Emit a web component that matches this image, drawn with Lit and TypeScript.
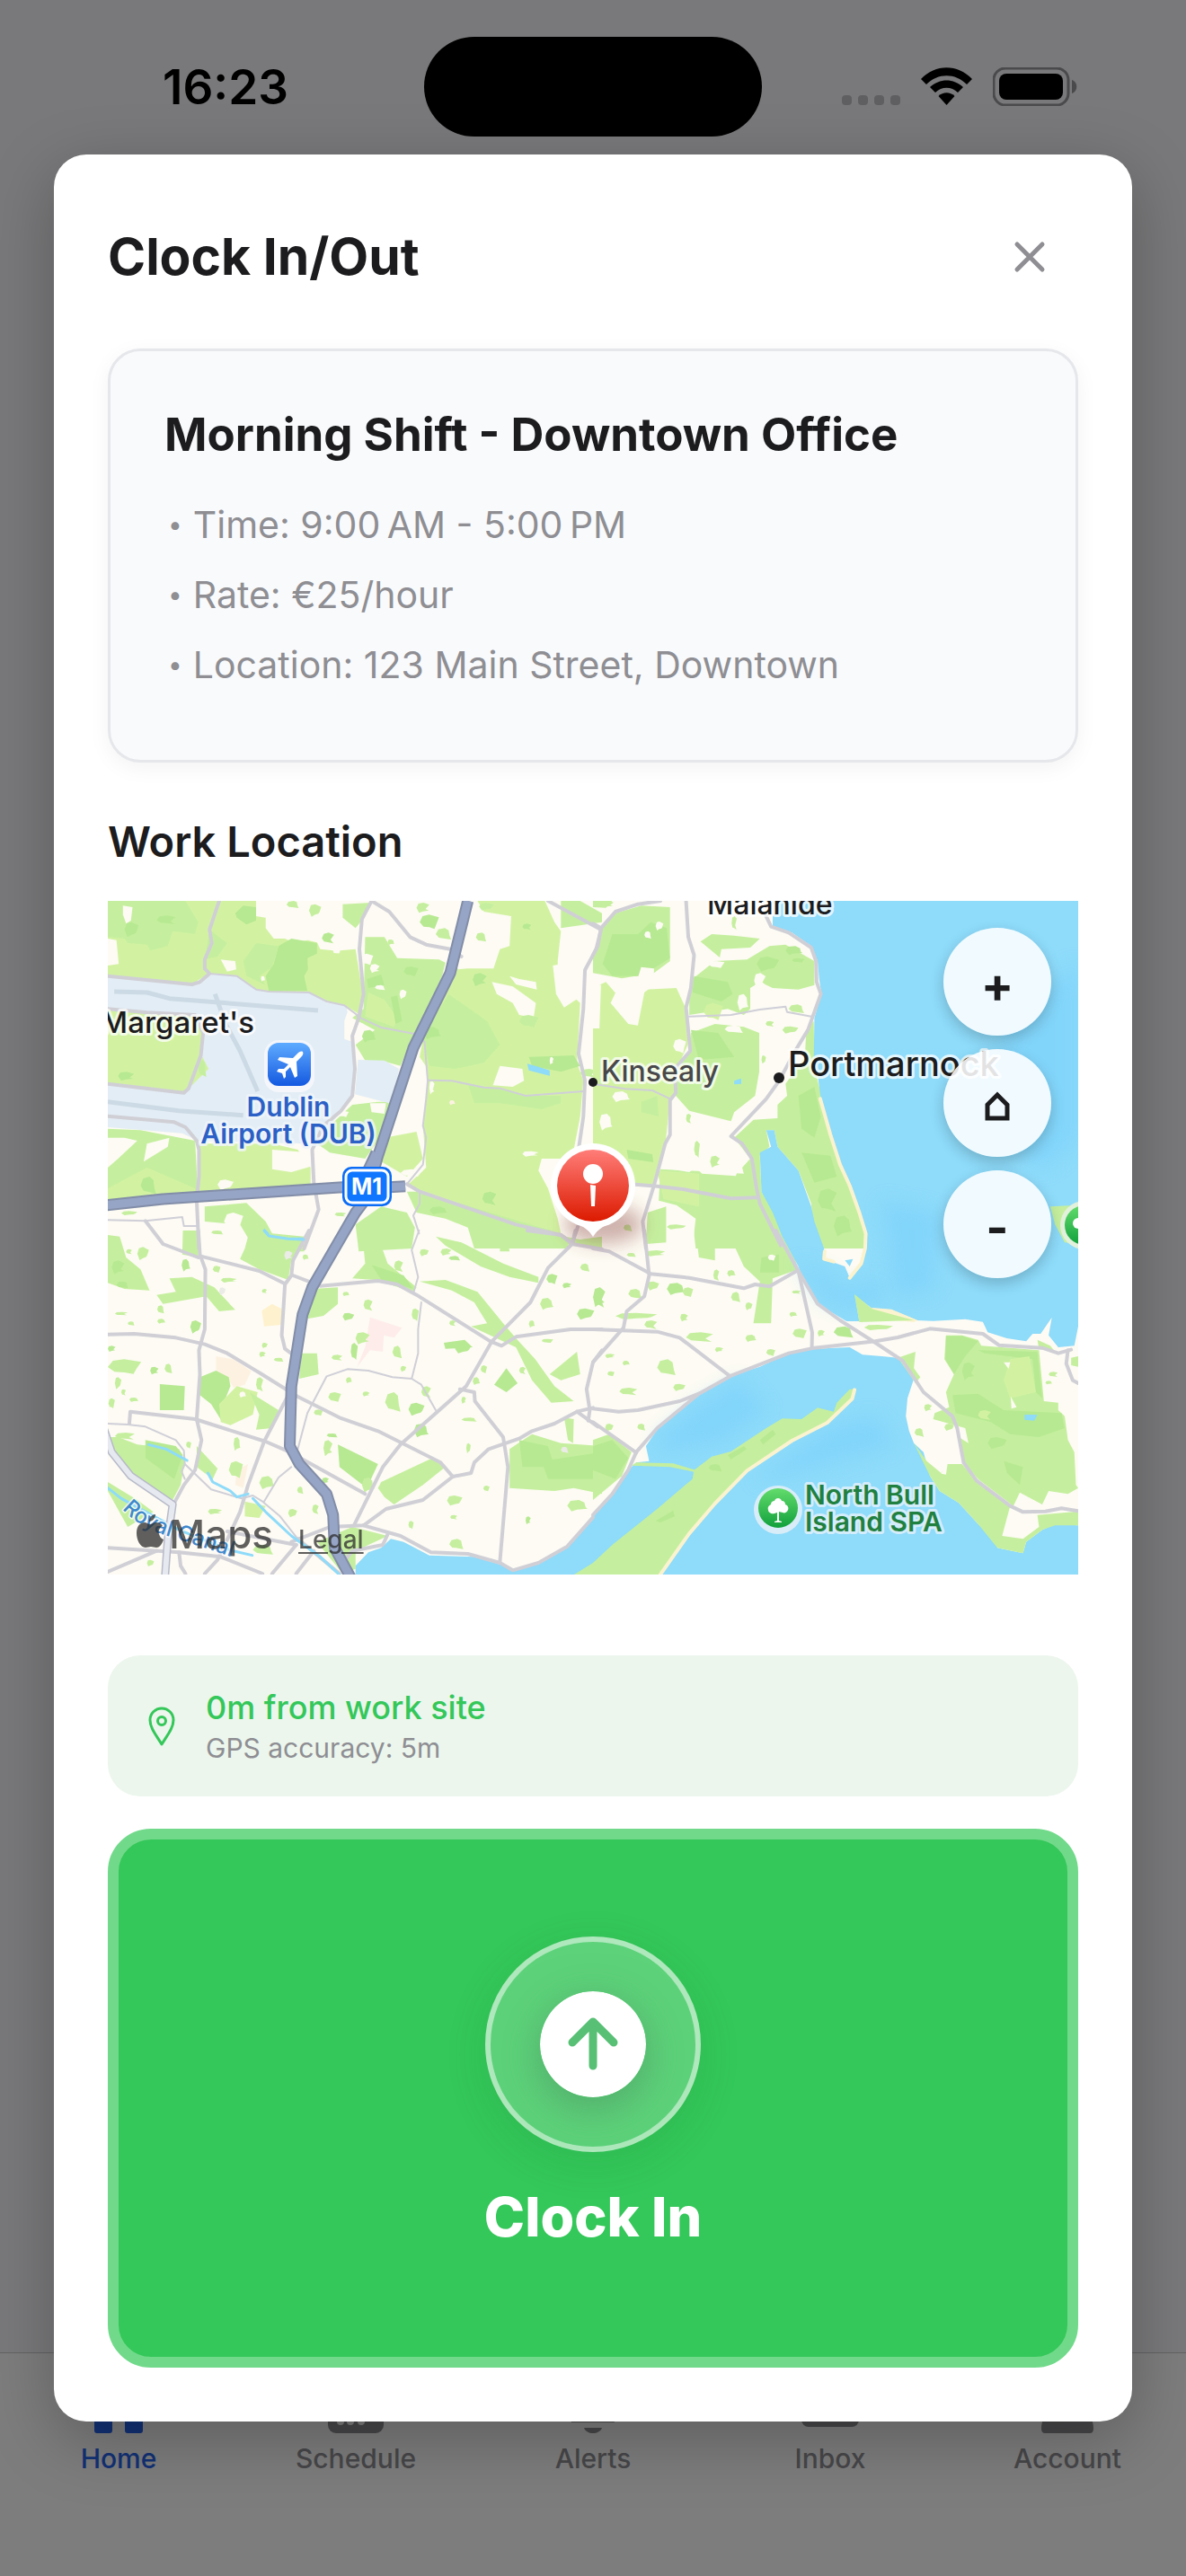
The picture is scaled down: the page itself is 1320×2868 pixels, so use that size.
import { LitElement, html, svg, css } from "lit";
import { customElement, property } from "lit/decorators.js";

/* ---------- map data: four survey tiles, each drawn in its own grid ---------- */

type TileId = "nw" | "ne" | "sw" | "se";
type Shape = [kind: string, points: string];
type Blob = [kind: string, x: number, y: number, w: number, h: number];

const TILE_MATRIX: Record<TileId, string> = {
  nw: "matrix(0.35714 0 0 0.33333 -10 -13)",
  ne: "matrix(0.35714 0 0 0.33333 540 -13)",
  sw: "matrix(0.35714 0 0 0.33333 -10 367)",
  se: "matrix(0.35714 0 0 0.33333 540 367)",
};

const AREAS: Record<TileId, Shape[]> = {
  nw: [
    ["light", "28,39 490,39 490,90 520,95 520,130 545,165 580,165 610,180 650,170 680,178 690,200 730,205 740,245 752,205 800,200 815,300 825,350 815,420 770,390 710,375 655,345 530,342 490,335 430,290 345,282 330,290 290,318 28,290"],
    ["mid", "28,39 270,39 310,110 300,150 230,140 215,190 160,205 150,185 90,180 80,165 28,160"],
    ["mid", "345,135 400,180 370,225 330,235"],
    ["deep", "425,80 450,55 490,60 490,105 460,118 430,95"],
    ["deep", "560,190 600,165 680,180 680,215 640,290 650,340 530,340 520,290 545,250"],
    ["mid", "490,180 560,190 540,260 500,290 520,320 460,290 450,240"],
    ["light", "650,230 690,210 760,215 790,250 800,300 770,345 700,340 655,340"],
    ["mid", "760,50 850,45 815,110 800,130 760,95"],
    ["cream", "75,55 105,60 100,105 85,115 75,85"],
    ["cream", "28,165 55,170 62,250 28,255"],
    ["cream", "380,235 425,240 428,268 400,275"],
    ["mid", "830,160 890,160 930,230 1060,235 1080,245 1070,290 1010,430 980,490 940,590 890,575 830,572 800,520 860,470 790,430 825,400"],
    ["light", "840,345 890,370 930,430 920,460 830,425"],
    ["deep", "835,300 880,285 890,320 840,330"],
    ["deep", "910,360 930,355 945,440 925,450"],
    ["light", "1120,265 1230,265 1250,200 1280,190 1285,90 1200,75 1180,39 1390,39 1420,110 1440,140 1430,240 1430,310 1500,380 1490,580 1510,640 1500,760 1480,870 1440,900 1380,900 1370,940 1400,1000 1430,1100 1440,1150 1300,1120 960,990 1020,930 1010,790 1020,700 1025,600 1000,560 1010,500 1040,440 1090,330 1100,270"],
    ["cream", "1130,200 1140,170 1180,210 1230,205 1220,255 1120,268"],
    ["mid", "1010,500 1040,440 1090,350 1210,440 1250,520 1200,580 1110,600 1030,590"],
    ["mid", "1440,39 1500,39 1568,80 1568,110 1440,130"],
    ["cream", "1225,310 1290,325 1362,380 1355,430 1310,420 1290,380 1240,350"],
    ["cream", "1280,290 1310,300 1362,310 1365,335 1300,318"],
    ["cream", "1250,590 1320,600 1325,640 1290,660 1228,655"],
    ["cream", "1415,255 1490,240 1500,360 1450,395 1425,350"],
    ["deep", "1340,560 1480,555 1500,590 1440,610 1350,590"],
    ["mid", "1150,650 1260,670 1330,690 1440,690 1440,715 1380,735 1250,715 1170,715"],
    ["mid", "28,800 130,805 300,840 310,1040 200,1045 28,1050"],
    ["light", "150,930 300,1000 300,1040 28,1050 28,1000"],
    ["cream", "28,830 80,830 120,840 60,900 28,930"],
    ["cream", "150,850 220,830 215,860 140,910"],
    ["light", "310,850 540,850 620,870 660,930 660,985 400,1022 310,1030"],
    ["cream", "540,870 660,880 665,925 600,945 540,935"],
    ["mid", "720,790 790,720 870,710 910,710 870,840 830,900 720,880 680,850"],
    ["cream", "845,715 895,715 890,750 850,745"],
    ["light", "890,830 990,810 1010,900 960,960 880,910"],
    ["mid", "960,1010 1000,1010 1440,1150 1470,1200 1170,1200 1150,1130 1080,1100 990,1080"],
    ["mid", "330,1060 460,1048 520,1110 540,1150 640,1160 640,1210 490,1210 440,1120 330,1110"],
    ["mid", "800,1120 880,1060 960,1080 985,1130 975,1200 810,1210"],
    ["airport", "28,295 290,318 345,282 430,290 490,335 530,342 655,345 710,378 770,388 775,410 765,440 765,500 790,510 800,560 795,690 770,720 720,790 640,850 310,840 260,815 28,795"],
    ["airport", "808,570 890,572 935,600 930,640 905,715 798,685"],
    ["light", "28,405 150,412 300,420 325,480 320,555 342,600 280,665 260,680 28,650"],
    ["water", "1335,583 1365,592 1405,605 1405,623 1340,605"],
    ["water", "515,1132 545,1165 520,1160"],
    ["water", "585,1163 640,1163 640,1178 590,1172"],
  ],
  ne: [
    ["mid", "70,80 150,55 240,60 240,240 190,280 90,298 0,280 0,220 25,130"],
    ["deep", "60,150 140,150 180,110 230,130 240,230 150,290 60,290 30,250"],
    ["mid", "0,39 60,39 40,62 0,60"],
    ["light", "0,330 40,310 130,420 160,335 260,330 290,400 295,520 270,580 258,680 240,700 225,860 190,990 100,985 0,980"],
    ["cream", "55,380 90,300 130,330 150,260 190,265 190,320 160,345 140,455 110,450"],
    ["cream", "0,310 25,320 20,465 0,465"],
    ["mid", "335,175 370,150 440,155 520,165 490,195 400,200 395,228"],
    ["mid", "310,300 380,240 480,235 550,190 600,185 690,240 690,320 640,335 560,330 520,310 490,330 490,400 470,420 420,400 300,420 300,350"],
    ["deep", "315,290 420,310 435,350 400,375 310,345"],
    ["mid", "305,480 380,450 470,460 518,480 518,610 505,690 440,745 430,775 300,740 258,690 255,610 300,550"],
    ["deep", "305,470 390,480 440,560 330,570"],
    ["mid", "665,470 688,440 690,560 700,640 720,720 745,830 790,960 840,1090 850,1200 690,1200 680,1050 640,940 575,860 565,805 540,805 550,860 520,890 525,1010 570,1090 600,1200 310,1200 320,1100 260,1055 205,1040 210,935 470,950 465,930 490,900 440,830 500,770 575,765 575,720 605,690 600,650 660,560"],
    ["cream", "215,930 300,800 360,810 400,850 430,850 465,900 445,958 340,950 320,930 300,945"],
    ["light", "200,940 330,950 330,1060 220,1035"],
    ["deep", "640,690 690,660 710,760 690,830 650,800"],
    ["deep", "650,880 740,890 760,960 690,980"],
    ["cream", "310,1100 250,1055 140,1030 60,1160 60,1200 320,1200"],
    ["mid", "170,1080 228,1060 228,1180 165,1185"],
    ["water", "440,640 462,632 462,650 440,652"],
    ["deep", "105,870 185,885 188,912 110,900"],
    ["mid", "150,710 200,690 205,760 150,745"],
  ],
  sw: [
    ["mid", "28,15 65,20 85,90 130,130 158,200 80,195 28,175"],
    ["mid", "262,0 310,0 310,90 260,80"],
    ["mid", "470,0 640,30 600,100 590,165 500,130 440,95 455,60"],
    ["mid", "820,0 870,20 900,110 990,190 980,205 860,165 790,160 830,110"],
    ["deep", "850,115 950,150 980,195 880,165"],
    ["mid", "220,160 290,155 360,190 425,265 375,270 335,220 200,245 180,215 240,205"],
    ["mid", "665,195 745,190 745,245 700,285 650,295"],
    ["mid", "1000,170 1080,165 1180,205 1260,310 1300,360 1360,430 1420,520 1480,570 1410,575 1350,500 1300,390 1160,320 1210,310 1170,240 1100,200"],
    ["mid", "1050,20 1130,40 1260,110 1370,155 1370,175 1280,155 1190,120 1080,50"],
    ["mid", "1250,0 1270,0 1280,70 1250,70"],
    ["mid", "1360,0 1500,30 1568,20 1568,60 1470,50"],
    ["pink", "845,290 945,325 920,358 888,350 885,405 845,400 805,455 830,390"],
    ["sand", "508,268 540,245 570,262 568,315 515,320"],
    ["peach", "365,420 420,430 475,470 455,515 420,525 400,490 365,480"],
    ["deep", "315,490 365,468 405,490 410,520 380,600 385,640 350,580 315,550"],
    ["light", "375,580 430,520 495,540 480,615 410,650 380,640"],
    ["mid", "470,540 560,600 540,660 490,665 500,615"],
    ["deep", "190,513 268,520 265,600 190,600"],
    ["mid", "630,410 680,410 685,480 625,495"],
    ["mid", "28,690 60,690 120,715 250,730 268,770 255,850 230,900 110,815 40,740"],
    ["deep", "145,700 240,720 262,750 235,830 145,760"],
    ["mid", "305,720 370,795 355,830 305,790"],
    ["deep", "745,715 870,780 835,860 750,790"],
    ["mid", "880,840 1040,760 1080,790 1010,850 920,915 890,890 870,860"],
    ["mid", "1280,730 1350,680 1440,710 1568,720 1568,880 1480,860 1420,870 1280,860"],
    ["deep", "1310,700 1400,720 1420,790 1320,790"],
    ["deep", "1380,770 1568,740 1568,830 1400,830"],
    ["mid", "28,840 120,900 170,940 90,990 28,870"],
    ["light", "455,905 520,920 500,960 455,955"],
    ["mid", "680,1040 790,990 900,1020 800,1070 800,1130 760,1146"],
    ["deep", "1232,515 1270,460 1305,510 1270,540"],
    ["mid", "1405,480 1490,405 1500,480 1440,500"],
    ["deep", "1075,375 1140,365 1165,390 1080,395"],
    ["mid", "1450,625 1480,630 1478,710 1462,700"],
    ["peach", "430,800 465,780 450,860 425,850"],
  ],
  se: [
    ["mid", "320,0 600,0 640,130 560,160 555,310 500,310 520,170 470,120 440,50 380,60 380,100 330,90"],
    ["deep", "525,90 580,80 580,140 520,140"],
    ["mid", "0,700 50,680 120,740 90,820 0,900"],
    ["deep", "0,720 60,700 110,760 70,830 0,800"],
    ["water", "560,-1101 560,-1015 620,-995 680,-950 700,-900 705,-840 712,-790 690,-710 688,-580 700,-520 710,-440 740,-320 770,-220 800,-150 830,-60 850,10 850,50 840,110 800,158 785,120 720,95 720,60 690,-30 680,-80 640,-200 575,-280 565,-335 540,-335 555,-280 520,-260 525,-130 560,-60 590,20 600,40 640,120 660,180 700,245 790,303 830,303 815,215 870,260 930,265 1010,300 1060,302 1160,296 1215,305 1230,340 1290,360 1350,370 1370,345 1395,345 1430,290 1420,350 1450,390 1500,385 1512,320 1512,-1101"],
    ["water", "0,950 60,880 110,800 135,775 175,770 165,720 200,665 250,610 330,545 430,485 520,455 610,410 690,395 800,390 840,415 900,420 950,425 1000,495 980,560 975,620 985,670 1000,710 1030,740 1050,820 1080,870 1140,910 1200,980 1255,1040 1260,1060 1340,1078 1350,1040 1400,1000 1440,980 1512,985 1512,1155 -740,1155 -740,1120 -700,1075 -660,1060 -630,1030 -590,1040 -510,1085 -370,1090 -290,1115 -250,1135 -170,1110 -80,1055"],
    ["shoal", "330,580 460,500 540,600 400,710 220,740 200,700"],
    ["shoal", "640,100 720,140 790,200 900,160 900,230 800,260 720,230"],
    ["shoal", "740,650 880,620 940,720 600,820 500,840"],
    ["shoal", "1300,-700 1512,-900 1512,-300 1400,-200 1200,-400"],
    ["shoal", "900,-100 1080,-60 1060,200 940,220"],
    ["cream2", "870,258 930,263 1012,300 1000,306 860,290"],
    ["mid", "815,213 870,262 1000,300 830,306"],
    ["mid", "1425,-80 1512,-85 1512,45 1470,40 1440,-20"],
    ["mid", "0,1110 60,1050 130,990 200,930 310,830 315,800 370,755 430,738 540,660 590,628 650,630 700,592 750,605 760,575 800,530 815,530 810,560 730,640 620,700 480,800 380,910 300,1010 210,1150 -60,1150"],
    ["mid", "135,775 250,778 320,800 315,806 240,790 120,785"],
    ["deep", "420,750 470,720 480,730 430,765"],
    ["deep", "520,700 560,665 570,680 530,715"],
    ["deep", "195,970 250,935 255,955 210,975"],
    ["mid", "1100,350 1150,350 1200,365 1210,385 1390,400 1405,570 1450,575 1450,600 1470,620 1480,700 1500,740 1505,850 1512,860 1480,880 1420,870 1400,915 1330,875 1310,920 1200,830 1160,780 1140,690 1170,710 1160,660 1060,630 1065,610 1110,590 1100,540 1125,480 1095,430"],
    ["deep", "1100,352 1150,352 1200,370 1160,420 1125,480 1098,430"],
    ["deep", "1120,550 1200,545 1280,600 1460,610 1470,660 1390,690 1300,680 1240,640 1130,610"],
    ["deep", "1200,400 1385,405 1400,560 1380,540 1370,430 1220,410"],
    ["light", "1300,430 1360,420 1380,540 1300,560 1280,500"],
    ["mid", "1000,710 1040,770 1085,810 1105,780 1150,780 1190,830 1300,920 1290,960 1275,1020 1340,1030 1390,990 1385,950 1512,938 1512,985 1440,985 1400,1000 1350,1040 1340,1078 1260,1060 1200,980 1140,910 1080,870 1050,820"],
    ["cream", "1095,790 1105,780 1100,815 1085,812"],
    ["deep", "1280,770 1340,790 1330,850 1290,810"],
    ["mid", "950,425 1005,405 1000,460 1020,490 1005,510"],
    ["water", "1345,615 1385,615 1375,635 1345,632"],
    ["cream", "1280,440 1300,440 1295,462"],
    ["cream", "1302,555 1320,590 1304,595"],
    ["water", "785,100 810,95 800,120"],
    ["mid", "1385,365 1425,385 1440,405 1390,395"],
    ["mid", "1490,425 1512,420 1512,455 1490,450"],
  ],
};

const BLOBS: Record<TileId, Blob[]> = {
  nw: [
    ["cream", 545, 85, 60, 26], ["mid", 585, 39, 40, 25], ["mid", 655, 50, 38, 42], ["deep", 695, 145, 38, 38],
    ["mid", 900, 168, 22, 18], ["cream", 815, 215, 40, 40], ["cream", 845, 250, 30, 30], ["cream", 860, 320, 34, 18],
    ["cream", 937, 335, 22, 32], ["cream", 765, 445, 60, 24], ["cream", 780, 470, 30, 28], ["deep", 950, 258, 46, 34],
    ["deep", 1165, 280, 44, 44], ["mid", 1175, 145, 34, 32], ["mid", 1185, 45, 46, 26], ["deep", 1320, 115, 28, 22],
    ["deep", 820, 470, 46, 42], ["deep", 1000, 85, 60, 50], ["mid", 990, 45, 40, 34], ["mid", 1050, 130, 50, 40],
    ["cream", 370, 970, 50, 34], ["deep", 1195, 1010, 44, 48], ["deep", 1030, 1060, 60, 26], ["cream", 940, 935, 70, 26],
    ["cream", 1320, 875, 50, 18], ["cream", 1380, 920, 26, 40], ["cream", 1500, 470, 40, 70], ["mid", 1500, 600, 50, 30],
    ["peach", 1092, 705, 20, 16], ["cream", 745, 740, 34, 22], ["cream", 1030, 640, 16, 46], ["mid", 350, 1140, 40, 14],
    ["mid", 70, 1075, 50, 14], ["mid", 735, 1080, 36, 14], ["cream", 505, 290, 14, 18], ["cream", 390, 1080, 60, 60],
    ["deep", 60, 610, 50, 30], ["mid", 310, 570, 26, 60], ["deep", 80, 110, 44, 50], ["deep", 180, 88, 60, 30],
    ["deep", 1010, 460, 60, 40], ["mid", 1310, 420, 60, 44], ["cream", 1405, 560, 12, 26], ["deep", 130, 960, 50, 60],
  ],
  ne: [
    ["mid", 30, 39, 34, 22], ["cream", 160, 140, 22, 26], ["cream", 195, 108, 24, 30], ["mid", 432, 90, 16, 48],
    ["deep", 600, 190, 56, 30], ["deep", 620, 230, 40, 16], ["cream", 502, 280, 36, 50], ["mid", 610, 385, 50, 30],
    ["mid", 590, 458, 50, 24], ["mid", 538, 440, 26, 20], ["cream", 450, 350, 36, 56], ["light", 345, 380, 60, 60],
    ["cream", 300, 428, 50, 30], ["cream", 410, 455, 60, 26], ["mid", 525, 555, 14, 28], ["mid", 290, 750, 16, 34],
    ["cream", 20, 750, 42, 56], ["mid", 315, 840, 18, 60], ["mid", 365, 890, 30, 40], ["mid", 95, 1120, 28, 24],
    ["mid", 230, 1120, 60, 16], ["mid", 325, 1140, 28, 30], ["cream", 60, 675, 58, 36], ["cream", 360, 240, 50, 24],
    ["cream", 510, 335, 100, 50], ["deep", 60, 180, 70, 60], ["deep", 510, 225, 70, 50], ["deep", 700, 1000, 60, 80],
    ["deep", 750, 1090, 60, 70], ["cream", 250, 500, 40, 50],
  ],
  sw: [
    ["deep", 40, 100, 40, 46], ["deep", 55, 170, 40, 24], ["mid", 120, 55, 36, 44], ["mid", 85, 62, 18, 18],
    ["deep", 258, 95, 28, 42], ["mid", 355, 118, 24, 24], ["mid", 380, 158, 50, 16], ["mid", 182, 250, 22, 28],
    ["deep", 285, 300, 34, 44], ["mid", 50, 272, 40, 12], ["mid", 182, 295, 28, 16], ["mid", 28, 430, 104, 52],
    ["deep", 160, 455, 26, 26], ["mid", 205, 445, 24, 34], ["mid", 50, 490, 20, 40], ["mid", 70, 530, 14, 22],
    ["mid", 95, 558, 30, 14], ["mid", 30, 560, 20, 36], ["deep", 28, 385, 24, 20], ["mid", 90, 304, 22, 14],
    ["deep", 760, 275, 36, 26], ["mid", 825, 230, 28, 40], ["mid", 760, 205, 22, 14], ["deep", 785, 375, 22, 60],
    ["mid", 800, 340, 44, 40], ["mid", 915, 385, 30, 44], ["mid", 940, 452, 18, 20], ["mid", 725, 415, 34, 20],
    ["mid", 770, 490, 20, 20], ["mid", 715, 540, 40, 34], ["mid", 822, 538, 22, 16], ["mid", 892, 540, 50, 68],
    ["deep", 965, 575, 50, 44], ["mid", 1005, 520, 30, 40], ["deep", 982, 645, 48, 46], ["mid", 670, 598, 28, 22],
    ["mid", 700, 700, 28, 54], ["deep", 710, 678, 36, 14], ["deep", 1110, 380, 50, 30], ["mid", 1092, 300, 20, 20],
    ["mid", 1165, 490, 24, 26], ["mid", 1190, 450, 20, 28], ["mid", 1130, 555, 14, 24], ["mid", 1130, 625, 50, 14],
    ["mid", 1145, 710, 14, 34], ["mid", 1310, 455, 20, 26], ["mid", 1375, 225, 44, 40], ["deep", 1395, 145, 34, 36],
    ["deep", 1445, 175, 28, 18], ["mid", 1500, 110, 30, 28], ["deep", 1490, 260, 54, 38], ["deep", 1545, 190, 30, 70],
    ["mid", 1340, 300, 20, 24], ["mid", 1380, 362, 36, 14], ["mid", 1065, 60, 34, 24], ["deep", 1090, 85, 38, 16],
    ["mid", 1000, 62, 28, 24], ["mid", 920, 100, 28, 40], ["mid", 500, 820, 50, 44], ["mid", 405, 770, 44, 60],
    ["deep", 695, 825, 22, 20], ["mid", 618, 855, 20, 26], ["mid", 590, 930, 28, 28], ["mid", 665, 915, 20, 34],
    ["mid", 820, 825, 40, 50], ["mid", 965, 970, 16, 28], ["deep", 1330, 955, 16, 26], ["mid", 1092, 1030, 46, 36],
    ["mid", 1085, 885, 48, 34], ["mid", 1095, 950, 22, 16], ["mid", 1460, 900, 66, 38], ["mid", 1198, 852, 20, 20],
    ["mid", 500, 405, 20, 18], ["mid", 545, 425, 32, 14], ["mid", 508, 375, 18, 18], ["mid", 490, 490, 22, 50],
    ["mid", 420, 690, 22, 46], ["mid", 272, 705, 16, 24], ["mid", 340, 930, 44, 18], ["mid", 480, 1050, 66, 34],
    ["mid", 150, 1100, 22, 22], ["mid", 508, 195, 16, 16], ["mid", 635, 80, 20, 18], ["mid", 975, 260, 22, 44],
    ["grey", 578, 68, 26, 30], ["grey", 1440, 722, 24, 22], ["grey", 375, 190, 20, 26], ["mid", 50, 675, 62, 24],
    ["cream", 438, 538, 22, 20], ["deep", 345, 490, 50, 60],
  ],
  se: [
    ["deep", 0, 190, 38, 66], ["mid", 110, 195, 44, 34], ["mid", 70, 275, 130, 22], ["mid", 160, 300, 40, 30],
    ["deep", 230, 175, 60, 40], ["mid", 280, 190, 32, 34], ["mid", 272, 278, 24, 26], ["mid", 430, 205, 30, 36],
    ["mid", 475, 240, 22, 26], ["mid", 620, 200, 28, 12], ["mid", 612, 272, 26, 16], ["mid", 622, 328, 44, 34],
    ["mid", 700, 332, 22, 22], ["deep", 750, 320, 64, 40], ["mid", 845, 315, 90, 18], ["mid", 290, 340, 84, 34],
    ["mid", 475, 348, 36, 24], ["mid", 540, 396, 28, 24], ["mid", 380, 390, 26, 16], ["mid", 200, 430, 60, 56],
    ["mid", 250, 512, 38, 24], ["mid", 82, 525, 56, 26], ["mid", 92, 435, 24, 16], ["mid", 45, 470, 22, 18],
    ["mid", 38, 412, 30, 14], ["mid", 138, 645, 26, 24], ["mid", 38, 645, 26, 26], ["mid", 1032, 580, 24, 24],
    ["mid", 1002, 660, 30, 30], ["mid", 1095, 645, 30, 24], ["mid", 1420, 472, 28, 18], ["mid", 1410, 502, 22, 12],
    ["mid", 160, 0, 68, 40], ["mid", 165, 66, 60, 20], ["mid", 105, 75, 30, 14], ["deep", 1230, 690, 60, 40],
    ["mid", 375, 130, 18, 40], ["mid", 418, 132, 28, 22], ["cream", 545, 80, 24, 22], ["deep", 1150, 440, 40, 60],
    ["deep", 360, 780, 44, 26], ["mid", 170, 170, 36, 30], ["light", 1200, 600, 40, 34],
  ],
};

const ROADS: Record<TileId, Shape[]> = {
  nw: [
    ["road", "375,39 345,135 352,180 330,235 330,265 345,282 315,310 290,318 28,290"],
    ["lane", "345,282 430,290 490,335 530,342 655,345 710,375 765,388 805,420"],
    ["road", "28,400 150,412 300,420 325,480 318,555 280,665 265,680 28,650"],
    ["road", "28,758 235,778 270,795 305,840 312,870 312,960 305,1040 312,1200"],
    ["road", "850,39 820,100 812,200 825,350 810,430 790,490 798,600 790,690 755,740 700,790 665,870 670,980 685,1070 640,1200"],
    ["road", "850,39 905,75 970,160 1020,185 1095,200 1130,225"],
    ["lane", "805,425 880,462 980,482 1015,510 1025,640 1020,700 1010,790 1020,830 1010,920 960,985"],
    ["road", "960,985 1000,1010 1300,1120 1440,1155 1480,1185"],
    ["lane", "1025,638 1100,640 1200,662 1250,665 1330,690 1510,675"],
    ["road", "1400,39 1565,135 1550,200 1515,270 1510,400 1495,550 1515,640 1510,760 1495,870"],
    ["lane", "28,1105 145,1108 260,1095 265,1125 305,1125"],
    ["lane", "1000,1010 1000,1050 980,1090 998,1150"],
    ["road", "1495,1120 1475,1185"],
  ],
  ne: [
    ["road", "0,115 25,130 70,75 140,50 210,39"],
    ["road", "25,130 15,190 0,220"],
    ["road", "290,39 297,160 315,220 305,330 290,395 303,540 255,600 258,680 240,705 240,820 225,850 190,990 155,1110 165,1200"],
    ["lane", "300,425 430,420 520,402 600,392 605,410 680,425"],
    ["road", "535,80 555,125 610,145 680,195 695,240 697,310 710,350 670,470 630,540 580,640 540,700 430,825 465,850 495,900 510,1000 520,1050 585,1190"],
    ["lane", "0,650 100,667 185,672 240,700"],
    ["road", "115,985 200,992 280,1002 430,1033 510,1030"],
  ],
  sw: [
    ["road", "145,-32 200,45 310,90"],
    ["road", "310,0 315,80 332,130 330,330 312,400 315,480 305,630 320,700 300,800 265,850 225,930"],
    ["road", "315,85 500,135 580,178"],
    ["road", "655,0 605,100 600,150 580,180 570,350 580,395 605,415"],
    ["road", "605,150 690,185 870,168 930,180 990,215 1220,370 1255,385 1300,355 1470,330 1568,330"],
    ["lane", "998,0 975,65 995,155 980,210"],
    ["lane", "1005,240 995,330 995,410 975,495 915,490 840,468 775,463 710,487 650,610 620,730"],
    ["lane", "975,495 1005,515 1050,600"],
    ["road", "28,347 110,345 240,358 330,380 400,410 500,475 620,555 750,625 870,670 1065,775 1103,822 1160,810 1170,775 1215,730 1310,695 1350,670 1420,645 1490,605 1540,592"],
    ["road", "1485,0 1475,45 1400,125 1345,240 1225,370 1145,520 940,715 885,790 795,985"],
    ["road", "1335,0 1440,15 1475,45 1568,62"],
    ["road", "1125,530 1170,540 1172,570 1260,690 1275,790 1250,1105"],
    ["road", "95,645 98,605 300,630 520,705 595,740"],
    ["lane", "28,645 90,648 145,655 240,700 265,735 268,780 258,805 268,830"],
    ["road", "590,550 515,705 465,850 440,940 410,1010 370,1100 330,1146"],
    ["road", "620,755 830,880"],
    ["lane", "600,790 560,825 515,905"],
    ["lane", "268,780 350,865 445,895 480,885 510,905 565,955 620,1030"],
    ["road", "620,1030 750,1146"],
    ["road", "1103,822 1010,900 895,930 825,985 720,990 600,1040"],
    ["road", "825,985 940,1020 1035,1075 1150,1080 1250,1110 1290,1135 1370,1110 1460,1055 1540,958"],
    ["road", "400,1005 615,1050"],
    ["road", "28,1060 250,1075 380,1090 510,1146"],
    ["road", "28,1140 180,1070"],
    ["road", "250,1075 255,1120 270,1146"],
    ["road", "615,1050 540,1146"],
    ["road", "670,1070 615,1146"],
    ["road", "900,1015 885,1050 790,1070 760,1110"],
    ["road", "1568,400 1540,440 1520,530 1530,600 1525,635"],
    ["road", "1490,605 1555,655"],
    ["creek", "340,810 355,840 410,870 430,890 465,880"],
    ["creek", "480,895 520,940 600,1020 690,1090 750,1150"],
    ["creek", "155,715 210,730 275,768"],
    ["creek", "28,860 70,895 250,1000 410,1068 478,1085"],
    ["creek", "515,0 530,18 590,28 638,30"],
  ],
  se: [
    ["road", "0,60 50,70 180,145 300,158 470,193 505,180 550,187 635,135"],
    ["road", "160,0 175,150 160,220 105,270 95,325 0,440"],
    ["road", "570,0 640,135 700,245 770,300 880,375 965,435 1030,540 1120,620 1135,660 1155,775 1195,835 1300,920 1340,940 1410,938 1460,928 1512,937"],
    ["road", "640,135 683,340 682,390"],
    ["road", "0,330 200,338 270,358 425,485"],
    ["road", "0,950 60,880 110,800 135,740 200,660 330,545 430,485 610,410 690,392 880,370 950,357 1050,328 1215,345 1265,383 1400,392 1450,410 1490,398"],
    ["road", "1480,400 1475,445 1495,500 1512,510"],
    ["road", "0,595 80,605 140,600 270,570 330,545"],
    ["road", "0,640 135,742"],
    ["beach", "815,532 808,562 730,642 620,702 480,802 380,912 300,1012 208,1152"],
    ["beach", "708,-440 740,-320 770,-220 800,-150 830,-60 850,10 848,60 836,110 800,158"],
    ["beach", "722,70 720,95 750,104"],
  ],
};

const MOTORWAYS: [TileId, string][] = [
  ["nw", "1150,39 1095,280 980,530 870,890 835,1030 800,1080 735,1200 665,1330 635,1420 600,1660 595,1860 625,1920 710,2020 730,2090 735,2200 790,2310"],
  ["nw", "10,1057 200,1035 760,995 830,1000 955,992"],
  ["nw", "865,880 830,960"],
];

/** Irregular outline inside a box, varied by its place in the list. */
function blobPoints([, x, y, w, h]: Blob, i: number): string {
  const corners = [[0.15, 0.1], [0.55, 0], [1, 0.22], [0.86, 0.62], [0.95, 0.95], [0.5, 0.84], [0.2, 1], [0, 0.5]];
  return corners
    .map(([cx, cy], n) => {
      const fx = (i + n) % 3 === 0 ? 1 - cx * 0.2 : 1;
      const fy = (i * 2 + n) % 4 === 0 ? 0.8 : 1;
      return `${Math.round(x + w * cx * fx)},${Math.round(y + h * cy * fy)}`;
    })
    .join(" ");
}

const TILES: TileId[] = ["nw", "ne", "sw", "se"];

@customElement("site-map")
class SiteMap extends LitElement {
  static styles = css`
    :host { display: block; position: relative; height: 750px; overflow: hidden; }
    .map { display: block; width: 100%; height: 100%; font-family: Inter, "Liberation Sans", sans-serif; }
    .light { fill: #d2f2a2; } .mid { fill: #c5ef9e; } .deep { fill: #b7e992; }
    .cream { fill: #fdfbf3; } .cream2 { fill: #fbf3cf; } .airport { fill: #e3edf5; }
    .water { fill: #8edbfa; } .shoal { fill: #80d4fb; opacity: 0.8; filter: url(#drift); }
    .pink { fill: #feecea; } .peach { fill: #fdf2e2; } .sand { fill: #fef1cd; } .grey { fill: #ebebe8; }
    polyline { fill: none; vector-effect: non-scaling-stroke; stroke-linejoin: round; stroke-linecap: round; }
    .road { stroke: #d0cfd6; stroke-width: 4px; } .lane { stroke: #d0cfd8; stroke-width: 2px; }
    .creek { stroke: #8edbfa; stroke-width: 3px; } .beach { stroke: #fbf3cf; stroke-width: 4px; }
    .runway { stroke: #ccdae5; stroke-width: 5px; stroke-linecap: butt; }
    .case { stroke: #828da8; stroke-width: 13px; stroke-linecap: butt; }
    .core { stroke: #96a4c5; stroke-width: 9px; stroke-linecap: butt; }
    .ring-case { stroke: #b7bac9; stroke-width: 9px; stroke-linecap: butt; }
    .ring-core { stroke: #e7e9f0; stroke-width: 6px; stroke-linecap: butt; }
    text { paint-order: stroke; stroke: rgba(255, 255, 255, 0.75); stroke-width: 6px; stroke-linejoin: round; font-size: 30px; font-weight: 500; fill: #1c1c1e; }
    .village { fill: #48484a; font-size: 32px; }
    .hamlet { font-size: 33px; }
    .town { font-size: 32px; }
    .port { font-size: 38px; }
    .air { fill: #2b60c6; font-weight: 600; stroke: rgba(240, 246, 250, 0.85); }
    .park { fill: #1f8040; font-weight: 600; stroke: rgba(222, 240, 250, 0.9); }
    .canal { fill: #3f88cc; font-size: 24px; stroke-width: 3px; }
    .shield { fill: #fff; stroke: none; font-size: 25px; font-weight: 700; }
    .brand { display: flex; align-items: baseline; gap: 28px; position: absolute; left: 32px; bottom: 18px; color: #2c2c2c; opacity: 0.75; font-family: Inter, "Liberation Sans", sans-serif; }
    .maps { display: flex; align-items: baseline; gap: 6px; font-size: 44px; line-height: 54px; font-weight: 500; }
    .maps svg { width: 30px; height: 38px; }
    .legal { color: inherit; font-size: 28px; font-weight: 500; text-underline-offset: 4px; text-decoration-thickness: 2px; }
    .controls { display: flex; flex-direction: column; gap: 15px; position: absolute; top: 30px; right: 30px; }
    .control { display: flex; align-items: center; justify-content: center; width: 120px; height: 120px; padding: 8px 0 0; border: 0; border-radius: 50%; background: rgba(255, 255, 255, 0.88); box-shadow: 0 6px 16px rgba(0, 0, 0, 0.2); color: #1c1c1e; font: 700 54px/56px Inter, "Liberation Sans", sans-serif; }
    .control svg { width: 28px; height: 34px; }
  `;

  private tile(id: TileId, content: unknown) {
    return svg`<g transform=${TILE_MATRIX[id]}>${content}</g>`;
  }

  render() {
    return html`
      <svg class="map" viewBox="0 0 1080 750" preserveAspectRatio="xMidYMid slice" role="img" aria-label="Map of the work site">
        <defs>
          <linearGradient id="red" x1="0" y1="0" x2="0" y2="1"><stop offset="0" stop-color="#ff7d78"></stop><stop offset="1" stop-color="#dc1a00"></stop></linearGradient>
          <linearGradient id="blue" x1="0" y1="0" x2="0" y2="1"><stop offset="0" stop-color="#5fabff"></stop><stop offset="1" stop-color="#1459e0"></stop></linearGradient>
          <linearGradient id="green" x1="0" y1="0" x2="0" y2="1"><stop offset="0" stop-color="#63dc6c"></stop><stop offset="1" stop-color="#11a03c"></stop></linearGradient>
          <filter id="soft" x="-50%" y="-50%" width="200%" height="200%"><feGaussianBlur stdDeviation="10"></feGaussianBlur></filter>
          <filter id="drift" x="-50%" y="-50%" width="200%" height="200%"><feGaussianBlur stdDeviation="30"></feGaussianBlur></filter>
          <path id="canal" d="M16 677 Q36 698 66 707 T160 738"></path>
        </defs>
        <rect class="cream" width="1080" height="750"></rect>
        ${(["nw", "sw", "ne", "se"] as TileId[]).map((id) => this.tile(id, svg`
          ${id === "se" ? BLOBS.se.slice(0, 27).map((b, i) => svg`<polygon class=${b[0]} points=${blobPoints(b, i)}></polygon>`) : null}
          ${AREAS[id].map(([k, p]) => svg`<polygon class=${k} points=${p}></polygon>`)}
          ${(id === "se" ? BLOBS.se.slice(27) : BLOBS[id]).map((b, i) => svg`<polygon class=${b[0]} points=${blobPoints(b, i)}></polygon>`)}`))}
        ${this.tile("nw", svg`
          <polyline class="runway" points="48,342 150,345 220,365 683,405"></polyline>
          <polyline class="runway" points="362,350 395,450 440,540 495,675"></polyline>
          <polyline class="runway" points="28,710 250,740 450,755"></polyline>`)}
        ${TILES.map((id) => this.tile(id, ROADS[id].map(([k, p]) => svg`<polyline class=${k} points=${p}></polyline>`)))}
        ${["ring-case", "ring-core"].map((k) => this.tile("sw", svg`<polyline class=${k} points="15,660 40,740 100,820 230,915 215,1030 206,1160"></polyline>`))}
        ${["case", "core"].map((k) => MOTORWAYS.map(([id, p]) => this.tile(id, svg`<polyline class=${k} points=${p}></polyline>`)))}

        <text class="hamlet" x="163" y="147" text-anchor="end">Margaret's</text>
        <text class="town" x="667" y="15">Malahide</text>
        <text class="village" x="549" y="201">Kinsealy</text>
        <circle cx="540" cy="202" r="5" fill="#1c1c1e"></circle>
        <text class="port" x="757" y="195">Portmarnock</text>
        <circle cx="747" cy="197" r="6" fill="#1c1c1e"></circle>
        <text class="canal"><textPath href="#canal">Royal Canal</textPath></text>

        <rect x="174" y="155" width="56" height="58" rx="16" fill="#f4f7fb" opacity="0.95"></rect>
        <rect x="178" y="158" width="48" height="48" rx="12" fill="url(#blue)"></rect>
        <path d="M216 169c1 2 0 4-2 6l-5 5 1 16-3 2-5-12-5 5 0 6-2 2-2-6-6-2 2-3 6 0 5-5-12-5 2-3 15 1 5-5c2-2 4-3 6-2z" fill="#fff" transform="translate(1 -1)"></path>
        <text class="air" x="201" y="240" text-anchor="middle">Dublin</text>
        <text class="air" x="201" y="270" text-anchor="middle">Airport (DUB)</text>

        <rect x="261" y="296" width="55" height="44" rx="10" fill="#0b6cf6"></rect>
        <rect x="265" y="300" width="47" height="36" rx="7" fill="#0f76ff" stroke="#fff" stroke-width="3"></rect>
        <text class="shield" x="288" y="327" text-anchor="middle">M1</text>

        <circle cx="746" cy="678" r="27" fill="#d8edf8"></circle>
        <circle cx="746" cy="676" r="22" fill="url(#green)"></circle>
        <path d="M745 690v-9l-3 1c-3 1-7-1-7-4-1-3 1-5 3-6 0-3 2-4 4-4 1-4 7-4 8 0 3 0 4 2 4 4 3 1 4 4 3 6-1 3-4 4-6 3l-4-1v10l3 1v1h-8v-1z" fill="#fff"></path>
        <text class="park" x="776" y="672">North Bull</text>
        <text class="park" x="776" y="702">Island SPA</text>
        <circle cx="1087" cy="361" r="27" fill="#e2f1dc"></circle>
        <circle cx="1087" cy="361" r="22" fill="url(#green)"></circle>
        <circle cx="1080" cy="359" r="6" fill="#fff"></circle>

        <ellipse cx="552" cy="360" rx="44" ry="22" fill="#7a2a2a" opacity="0.35" filter="url(#soft)"></ellipse>
        <circle cx="540" cy="317" r="47" fill="#fff"></circle>
        <path d="M517 356C530 363 535 366 540 374C545 366 550 363 563 356z" fill="#fff"></path>
        <circle cx="540" cy="317" r="40" fill="url(#red)"></circle>
        <circle cx="540" cy="304" r="11" fill="#fff"></circle>
        <path d="M537 316l6 1-1 23h-4z" fill="#fff"></path>
      </svg>
      <div class="brand">
        <span class="maps">
          <svg viewBox="0 0 30 38" aria-hidden="true"><path fill="currentColor" d="M21 0c0 4-3 8-7 8 0-4 3-8 7-8zM15 11c2 0 4-2 7-2 3 0 5 1 7 4-4 2-5 6-4 9 1 3 2 5 5 6-1 4-4 9-8 9-2 0-4-1-6-1s-4 1-6 1C4 37 0 28 0 21 0 13 4 9 9 9c2 0 4 2 6 2z"></path></svg>
          Maps
        </span>
        <a class="legal" href="#legal">Legal</a>
      </div>
      <div class="controls">
        <button class="control" aria-label="Zoom in">+</button>
        <button class="control" aria-label="Centre on work site">
          <svg viewBox="0 0 28 34" aria-hidden="true"><path d="M3 30V15L14 4l11 11v15z" fill="none" stroke="currentColor" stroke-width="5"></path></svg>
        </button>
        <button class="control" aria-label="Zoom out">-</button>
      </div>`;
  }
}

@customElement("status-bar")
class StatusBar extends LitElement {
  static styles = css`
    :host { display: grid; grid-template-columns: 1fr auto 1fr; align-items: center; padding: 41px 0 0; color: #000; font-family: Inter, "Liberation Sans", sans-serif; }
    .time { padding-left: 30px; text-align: center; font-size: 53px; line-height: 60px; font-weight: 600; }
    .island { width: 376px; height: 111px; border-radius: 56px; background: #000; }
    .signals { display: flex; justify-content: flex-end; align-items: center; gap: 23px; padding-right: 121px; }
    svg { display: block; height: 43px; }
    .dots { width: 65px; } .wifi { width: 57px; } .battery { width: 94px; }
  `;
  render() {
    return html`
      <span class="time">16:23</span>
      <div class="island"></div>
      <div class="signals">
        <svg class="dots" viewBox="0 0 65 43" aria-label="No signal">
          ${[0, 18, 36, 54].map((x) => svg`<rect x=${x} y="31" width="11" height="11" rx="4" fill="#5f5f61"></rect>`)}
        </svg>
        <svg class="wifi" viewBox="0 0 57 43" aria-label="Wi-Fi">
          <path d="M28.500 42l-9-10c5-5 13-5 18 0z"></path>
          <path d="M10 22c11-10 26-10 37 0l-6 6c-7-7-18-7-25 0z"></path>
          <path d="M0 13c16-17 41-17 57 0l-6 6C38 6 19 6 6 19z"></path>
        </svg>
        <svg class="battery" viewBox="0 0 94 43" aria-label="Battery full">
          <rect x="1" y="1" width="83" height="41" rx="13" fill="none" stroke="#4a4a4c" stroke-width="3"></rect>
          <rect x="7" y="7" width="71" height="29" rx="8"></rect>
          <path d="M88 14c7 2 7 13 0 15z" fill="#4a4a4c"></path>
        </svg>
      </div>`;
  }
}

@customElement("tab-bar")
class TabBar extends LitElement {
  static styles = css`
    :host { display: flex; border-top: 1px solid #c6c6c8; background: #fbfbfb; font-family: Inter, "Liberation Sans", sans-serif; }
    .tab { flex: 1; display: flex; flex-direction: column; align-items: center; gap: 9px; padding: 17px 0 113px; color: #8e8e93; text-decoration: none; font-size: 30px; line-height: 36px; font-weight: 500; }
    .tab svg { width: 72px; height: 73px; }
    .active { color: #2563eb; }
  `;
  render() {
    return html`
      <a class="tab active" href="#home" aria-current="page">
        <svg viewBox="0 0 72 73" aria-hidden="true"><path fill="currentColor" d="M9 38L36 10l27 28v31q0 3-3 3H46q-3 0-3-3V50H29v19q0 3-3 3H12q-3 0-3-3z"></path></svg>Home</a>
      <a class="tab" href="#schedule">
        <svg viewBox="0 0 72 73" aria-hidden="true"><rect x="5" y="12" width="62" height="60" rx="9" fill="currentColor"></rect><g fill="#fbfbfb"><circle cx="19" cy="59" r="4"></circle><circle cx="30" cy="59" r="4"></circle><circle cx="42" cy="59" r="4"></circle><path d="M5 26h62v4H5z"></path></g></svg>Schedule</a>
      <a class="tab" href="#alerts">
        <svg viewBox="0 0 72 73" aria-hidden="true"><path fill="currentColor" d="M12 60c0-6 6-8 6-26 0-14 8-22 18-22s18 8 18 22c0 18 6 20 6 26zM26 66h20c-3 8-17 8-20 0z"></path></svg>Alerts</a>
      <a class="tab" href="#inbox">
        <svg viewBox="0 0 72 73" aria-hidden="true"><rect x="4" y="16" width="64" height="49" rx="8" fill="currentColor"></rect></svg>Inbox</a>
      <a class="tab" href="#account">
        <svg viewBox="0 0 72 73" aria-hidden="true"><circle cx="36" cy="24" r="14" fill="currentColor"></circle><path fill="currentColor" d="M7 67c0-14 10-24 29-24s29 10 29 24q0 5-4 5H11q-4 0-4-5z"></path></svg>Account</a>`;
  }
}

@customElement("app-root")
class AppRoot extends LitElement {
  @property({ attribute: false }) details = [
    "Time: 9:00\u202fAM - 5:00\u202fPM",
    "Rate: €25/hour",
    "Location: 123 Main Street, Downtown",
  ];

  static styles = css`
    :host { display: grid; min-height: 100vh; background: #f2f2f7; color: #1c1c1e; font-family: Inter, "Liberation Sans", sans-serif; }
    :host > * { grid-area: 1 / 1; min-width: 0; }
    h1, h2, h3, p, ul { margin: 0; padding: 0; font-weight: inherit; }
    tab-bar { align-self: end; }
    status-bar { align-self: start; z-index: 2; }
    .backdrop { z-index: 1; display: flex; align-items: center; padding: 60px; background: rgba(0, 0, 0, 0.5); }
    .sheet { flex: 1; min-width: 0; padding: 60px; border-radius: 36px; background: #fff; box-shadow: 0 20px 72px rgba(0, 0, 0, 0.25); }
    .header { display: flex; align-items: center; justify-content: space-between; height: 108px; margin-bottom: 48px; }
    .title { font-size: 57px; line-height: 72px; font-weight: 700; }
    .close { display: flex; align-items: center; justify-content: center; width: 108px; height: 108px; padding: 0; border: 0; background: none; color: #8e8e93; }
    .close svg { width: 36px; height: 36px; }
    .shift { padding: 60px 60px 79px; border: 3px solid #e5e7eb; border-radius: 36px; background: #f9fafc; box-shadow: 0 6px 24px rgba(0, 0, 0, 0.05); }
    .shift-name { margin-bottom: 40px; font-size: 51px; line-height: 66px; font-weight: 700; }
    .details { display: flex; flex-direction: column; gap: 24px; list-style: none; color: #8e8e93; font-size: 41px; line-height: 54px; }
    .detail { display: flex; gap: 12px; padding-left: 4px; }
    .dot { font-size: 28px; }
    .section { margin: 58px 0 36px; font-size: 47px; line-height: 60px; font-weight: 600; }
    .gps { display: flex; align-items: center; gap: 25px; min-height: 157px; margin: 90px 0 36px; padding: 0 36px; box-sizing: border-box; border-radius: 36px; background: #ecf6ed; }
    .gps svg { width: 48px; height: 48px; color: #34c759; }
    .distance { color: #34c759; font-size: 36px; line-height: 48px; font-weight: 500; }
    .accuracy { color: #8e8e93; font-size: 30px; line-height: 42px; }
    .clock { display: flex; flex-direction: column; align-items: center; justify-content: center; gap: 36px; width: 100%; height: 600px; padding: 0 0 12px; border: 12px solid #71da8a; border-radius: 48px; background: #34c759; color: #fff; font: 800 61px/72px Inter, "Liberation Sans", sans-serif; }
    .badge { display: flex; align-items: center; justify-content: center; box-sizing: border-box; width: 240px; height: 240px; border: 6px solid #aee8bc; border-radius: 50%; background: #5dd27a; box-shadow: 0 12px 48px rgba(20, 110, 45, 0.12); }
    .badge svg { width: 118px; height: 118px; border-radius: 50%; box-shadow: 0 12px 48px rgba(70, 130, 90, 0.5); }
  `;

  render() {
    return html`
      <tab-bar></tab-bar>
      <div class="backdrop">
        <main class="sheet" role="dialog" aria-labelledby="title">
          <header class="header">
            <h1 class="title" id="title">Clock In/Out</h1>
            <button class="close" aria-label="Close">
              <svg viewBox="0 0 36 36" aria-hidden="true"><path d="M4 4l28 28M32 4L4 32" stroke="currentColor" stroke-width="5" stroke-linecap="round"></path></svg>
            </button>
          </header>
          <section class="shift">
            <h2 class="shift-name">Morning Shift - Downtown Office</h2>
            <ul class="details">
              ${this.details.map((d) => html`<li class="detail"><span class="dot">•</span><span>${d}</span></li>`)}
            </ul>
          </section>
          <h3 class="section">Work Location</h3>
          <site-map></site-map>
          <div class="gps">
            <svg viewBox="0 0 48 48" fill="none" stroke="currentColor" stroke-width="3" stroke-linejoin="round" aria-hidden="true"><path d="M24 44C18 34 11 26 11 17a13 13 0 0 1 26 0c0 9-7 17-13 27z"></path><circle cx="24" cy="18" r="4.500"></circle></svg>
            <div>
              <p class="distance">0m from work site</p>
              <p class="accuracy">GPS accuracy: 5m</p>
            </div>
          </div>
          <button class="clock">
            <span class="badge">
              <svg viewBox="0 0 118 118" aria-hidden="true"><circle cx="59" cy="59" r="59" fill="#fff"></circle><path d="M59 83V35M36 57l23-23 23 23" fill="none" stroke="#58c075" stroke-width="9" stroke-linecap="round" stroke-linejoin="round"></path></svg>
            </span>
            Clock In
          </button>
        </main>
      </div>
      <status-bar></status-bar>`;
  }
}
